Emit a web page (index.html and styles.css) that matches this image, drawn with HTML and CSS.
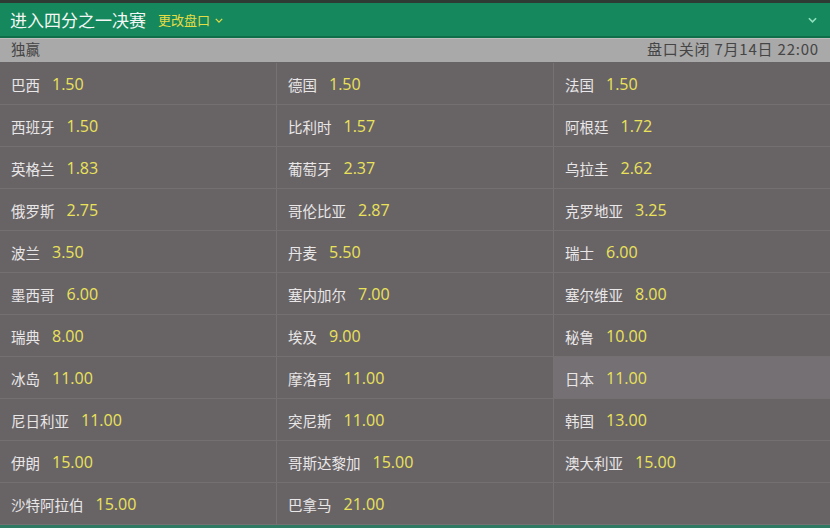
FILE: index.html
```html
<!DOCTYPE html>
<html lang="zh-CN">
<head>
<meta charset="utf-8">
<link rel="stylesheet" href="styles.css">
</head>
<body>
<div class="page">
  <div class="topline"></div>
  <header class="bar">
    <div class="bar-left">
      <span class="title">进入四分之一决赛</span>
      <span class="change">更改盘口 <svg class="chev-s" viewBox="0 0 10 6" width="8" height="5"><path d="M1 1 L5 5 L9 1" fill="none" stroke="#e6dc46" stroke-width="1.6"/></svg></span>
    </div>
    <svg class="chev" viewBox="0 0 10 6" width="9" height="6"><path d="M1 1 L5 5 L9 1" fill="none" stroke="#8fe0bd" stroke-width="1.8"/></svg>
  </header>
  <div class="sub">
    <span>独赢</span>
    <span class="close">盘口关闭 7月14日 22:00</span>
  </div>
  <div class="grid">
    <div class="cell"><span class="n">巴西</span><span class="o">1.50</span></div>
    <div class="cell"><span class="n">德国</span><span class="o">1.50</span></div>
    <div class="cell"><span class="n">法国</span><span class="o">1.50</span></div>
    <div class="cell"><span class="n">西班牙</span><span class="o">1.50</span></div>
    <div class="cell"><span class="n">比利时</span><span class="o">1.57</span></div>
    <div class="cell"><span class="n">阿根廷</span><span class="o">1.72</span></div>
    <div class="cell"><span class="n">英格兰</span><span class="o">1.83</span></div>
    <div class="cell"><span class="n">葡萄牙</span><span class="o">2.37</span></div>
    <div class="cell"><span class="n">乌拉圭</span><span class="o">2.62</span></div>
    <div class="cell"><span class="n">俄罗斯</span><span class="o">2.75</span></div>
    <div class="cell"><span class="n">哥伦比亚</span><span class="o">2.87</span></div>
    <div class="cell"><span class="n">克罗地亚</span><span class="o">3.25</span></div>
    <div class="cell"><span class="n">波兰</span><span class="o">3.50</span></div>
    <div class="cell"><span class="n">丹麦</span><span class="o">5.50</span></div>
    <div class="cell"><span class="n">瑞士</span><span class="o">6.00</span></div>
    <div class="cell"><span class="n">墨西哥</span><span class="o">6.00</span></div>
    <div class="cell"><span class="n">塞内加尔</span><span class="o">7.00</span></div>
    <div class="cell"><span class="n">塞尔维亚</span><span class="o">8.00</span></div>
    <div class="cell"><span class="n">瑞典</span><span class="o">8.00</span></div>
    <div class="cell"><span class="n">埃及</span><span class="o">9.00</span></div>
    <div class="cell"><span class="n">秘鲁</span><span class="o">10.00</span></div>
    <div class="cell"><span class="n">冰岛</span><span class="o">11.00</span></div>
    <div class="cell"><span class="n">摩洛哥</span><span class="o">11.00</span></div>
    <div class="cell hl"><span class="n">日本</span><span class="o">11.00</span></div>
    <div class="cell"><span class="n">尼日利亚</span><span class="o">11.00</span></div>
    <div class="cell"><span class="n">突尼斯</span><span class="o">11.00</span></div>
    <div class="cell"><span class="n">韩国</span><span class="o">13.00</span></div>
    <div class="cell"><span class="n">伊朗</span><span class="o">15.00</span></div>
    <div class="cell"><span class="n">哥斯达黎加</span><span class="o">15.00</span></div>
    <div class="cell"><span class="n">澳大利亚</span><span class="o">15.00</span></div>
    <div class="cell"><span class="n">沙特阿拉伯</span><span class="o">15.00</span></div>
    <div class="cell"><span class="n">巴拿马</span><span class="o">21.00</span></div>
    <div class="cell"></div>
  </div>
  <div class="bottomline"></div>
</div>
</body>
</html>
```
FILE: styles.css
```css
html, body {
  margin: 0;
  padding: 0;
  background: #686466;
}
body {
  font-family: "Noto Sans CJK SC", "Open Sans", sans-serif;
  width: 830px;
  height: 528px;
  overflow: hidden;
}
.page {
  display: flex;
  flex-direction: column;
  width: 830px;
  height: 528px;
}
.topline {
  height: 3px;
  background: #2e3b35;
}
.bar {
  height: 33px;
  background: #15895d;
  border-bottom: 2px solid #0f6e4a;
  display: flex;
  align-items: center;
  justify-content: space-between;
  padding: 0 10px 0 10px;
}
.bar-left {
  display: flex;
  align-items: center;
  gap: 12px;
}
.title {
  color: #f4f7f5;
  font-size: 17px;
  line-height: 20px;
}
.change {
  color: #e6dc46;
  font-size: 13px;
  line-height: 16px;
  display: flex;
  align-items: center;
  gap: 5px;
  margin-top: 1px;
}
.chev {
  margin-right: 3px;
}
.sub {
  height: 24px;
  box-sizing: border-box;
  background: #a9a9a9;
  border-top: 1px solid #bdbdbd;
  display: flex;
  align-items: center;
  justify-content: space-between;
  padding: 0 11px 3px 11px;
  color: #454545;
  font-size: 14.5px;
  line-height: 18px;
}
.close {
  font-size: 15px;
  letter-spacing: 0.8px;
}
.grid {
  display: grid;
  grid-template-columns: 277px 277px 276px;
  grid-auto-rows: 42px;
  margin-top: 1px;
}
.cell {
  display: flex;
  align-items: center;
  gap: 12px;
  padding-left: 11px;
  border-bottom: 1px solid #747072;
  border-right: 1px solid #767274;
  font-size: 14.5px;
  padding-top: 1px;
  box-sizing: border-box;
}
.cell:nth-child(3n) {
  border-right: none;
}
.cell.hl {
  background: #747073;
}
.n {
  color: #e8e6e7;
}
.o {
  color: #ebe25a;
  font-size: 16px;
  font-family: "Open Sans", "Noto Sans CJK SC", sans-serif;
}
.bottomline {
  flex: 1;
  background: #2f7a63;
}
```
